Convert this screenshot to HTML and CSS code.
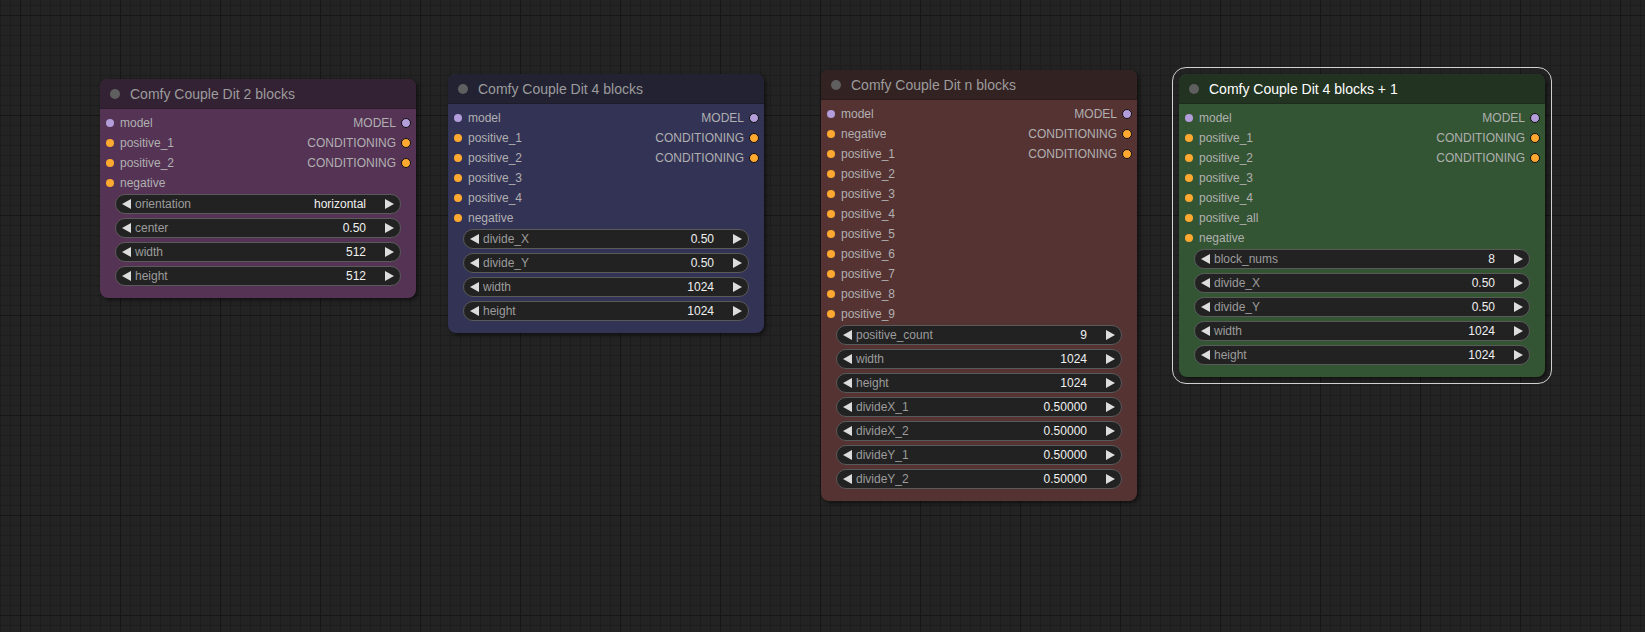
FILE: index.html
```html
<!DOCTYPE html>
<html>
<head>
<meta charset="utf-8">
<link rel="stylesheet" href="styles.css">
</head>
<body>
<div class="canvas">

  <div class="node purple n1">
    <div class="title"><span class="tdot"></span><span class="ttext">Comfy Couple Dit 2 blocks</span></div>
    <div class="rows">
      <div class="row"><span class="in"><i class="dot model"></i>model</span><span class="out">MODEL<i class="odot model"></i></span></div>
      <div class="row"><span class="in"><i class="dot cond"></i>positive_1</span><span class="out">CONDITIONING<i class="odot cond"></i></span></div>
      <div class="row"><span class="in"><i class="dot cond"></i>positive_2</span><span class="out">CONDITIONING<i class="odot cond"></i></span></div>
      <div class="row"><span class="in"><i class="dot cond"></i>negative</span></div>
    </div>
    <div class="widgets">
      <div class="widget"><svg class="arr" viewBox="0 0 9 10"><polygon points="9,0 0,5 9,10"/></svg><span class="wl">orientation</span><span class="wv">horizontal</span><svg class="arr r" viewBox="0 0 9 10"><polygon points="0,0 9,5 0,10"/></svg></div>
      <div class="widget"><svg class="arr" viewBox="0 0 9 10"><polygon points="9,0 0,5 9,10"/></svg><span class="wl">center</span><span class="wv">0.50</span><svg class="arr r" viewBox="0 0 9 10"><polygon points="0,0 9,5 0,10"/></svg></div>
      <div class="widget"><svg class="arr" viewBox="0 0 9 10"><polygon points="9,0 0,5 9,10"/></svg><span class="wl">width</span><span class="wv">512</span><svg class="arr r" viewBox="0 0 9 10"><polygon points="0,0 9,5 0,10"/></svg></div>
      <div class="widget"><svg class="arr" viewBox="0 0 9 10"><polygon points="9,0 0,5 9,10"/></svg><span class="wl">height</span><span class="wv">512</span><svg class="arr r" viewBox="0 0 9 10"><polygon points="0,0 9,5 0,10"/></svg></div>
    </div>
  </div>

  <div class="node blue n2">
    <div class="title"><span class="tdot"></span><span class="ttext">Comfy Couple Dit 4 blocks</span></div>
    <div class="rows">
      <div class="row"><span class="in"><i class="dot model"></i>model</span><span class="out">MODEL<i class="odot model"></i></span></div>
      <div class="row"><span class="in"><i class="dot cond"></i>positive_1</span><span class="out">CONDITIONING<i class="odot cond"></i></span></div>
      <div class="row"><span class="in"><i class="dot cond"></i>positive_2</span><span class="out">CONDITIONING<i class="odot cond"></i></span></div>
      <div class="row"><span class="in"><i class="dot cond"></i>positive_3</span></div>
      <div class="row"><span class="in"><i class="dot cond"></i>positive_4</span></div>
      <div class="row"><span class="in"><i class="dot cond"></i>negative</span></div>
    </div>
    <div class="widgets">
      <div class="widget"><svg class="arr" viewBox="0 0 9 10"><polygon points="9,0 0,5 9,10"/></svg><span class="wl">divide_X</span><span class="wv">0.50</span><svg class="arr r" viewBox="0 0 9 10"><polygon points="0,0 9,5 0,10"/></svg></div>
      <div class="widget"><svg class="arr" viewBox="0 0 9 10"><polygon points="9,0 0,5 9,10"/></svg><span class="wl">divide_Y</span><span class="wv">0.50</span><svg class="arr r" viewBox="0 0 9 10"><polygon points="0,0 9,5 0,10"/></svg></div>
      <div class="widget"><svg class="arr" viewBox="0 0 9 10"><polygon points="9,0 0,5 9,10"/></svg><span class="wl">width</span><span class="wv">1024</span><svg class="arr r" viewBox="0 0 9 10"><polygon points="0,0 9,5 0,10"/></svg></div>
      <div class="widget"><svg class="arr" viewBox="0 0 9 10"><polygon points="9,0 0,5 9,10"/></svg><span class="wl">height</span><span class="wv">1024</span><svg class="arr r" viewBox="0 0 9 10"><polygon points="0,0 9,5 0,10"/></svg></div>
    </div>
  </div>

  <div class="node red n3">
    <div class="title"><span class="tdot"></span><span class="ttext">Comfy Couple Dit n blocks</span></div>
    <div class="rows">
      <div class="row"><span class="in"><i class="dot model"></i>model</span><span class="out">MODEL<i class="odot model"></i></span></div>
      <div class="row"><span class="in"><i class="dot cond"></i>negative</span><span class="out">CONDITIONING<i class="odot cond"></i></span></div>
      <div class="row"><span class="in"><i class="dot cond"></i>positive_1</span><span class="out">CONDITIONING<i class="odot cond"></i></span></div>
      <div class="row"><span class="in"><i class="dot cond"></i>positive_2</span></div>
      <div class="row"><span class="in"><i class="dot cond"></i>positive_3</span></div>
      <div class="row"><span class="in"><i class="dot cond"></i>positive_4</span></div>
      <div class="row"><span class="in"><i class="dot cond"></i>positive_5</span></div>
      <div class="row"><span class="in"><i class="dot cond"></i>positive_6</span></div>
      <div class="row"><span class="in"><i class="dot cond"></i>positive_7</span></div>
      <div class="row"><span class="in"><i class="dot cond"></i>positive_8</span></div>
      <div class="row"><span class="in"><i class="dot cond"></i>positive_9</span></div>
    </div>
    <div class="widgets">
      <div class="widget"><svg class="arr" viewBox="0 0 9 10"><polygon points="9,0 0,5 9,10"/></svg><span class="wl">positive_count</span><span class="wv">9</span><svg class="arr r" viewBox="0 0 9 10"><polygon points="0,0 9,5 0,10"/></svg></div>
      <div class="widget"><svg class="arr" viewBox="0 0 9 10"><polygon points="9,0 0,5 9,10"/></svg><span class="wl">width</span><span class="wv">1024</span><svg class="arr r" viewBox="0 0 9 10"><polygon points="0,0 9,5 0,10"/></svg></div>
      <div class="widget"><svg class="arr" viewBox="0 0 9 10"><polygon points="9,0 0,5 9,10"/></svg><span class="wl">height</span><span class="wv">1024</span><svg class="arr r" viewBox="0 0 9 10"><polygon points="0,0 9,5 0,10"/></svg></div>
      <div class="widget"><svg class="arr" viewBox="0 0 9 10"><polygon points="9,0 0,5 9,10"/></svg><span class="wl">divideX_1</span><span class="wv">0.50000</span><svg class="arr r" viewBox="0 0 9 10"><polygon points="0,0 9,5 0,10"/></svg></div>
      <div class="widget"><svg class="arr" viewBox="0 0 9 10"><polygon points="9,0 0,5 9,10"/></svg><span class="wl">divideX_2</span><span class="wv">0.50000</span><svg class="arr r" viewBox="0 0 9 10"><polygon points="0,0 9,5 0,10"/></svg></div>
      <div class="widget"><svg class="arr" viewBox="0 0 9 10"><polygon points="9,0 0,5 9,10"/></svg><span class="wl">divideY_1</span><span class="wv">0.50000</span><svg class="arr r" viewBox="0 0 9 10"><polygon points="0,0 9,5 0,10"/></svg></div>
      <div class="widget"><svg class="arr" viewBox="0 0 9 10"><polygon points="9,0 0,5 9,10"/></svg><span class="wl">divideY_2</span><span class="wv">0.50000</span><svg class="arr r" viewBox="0 0 9 10"><polygon points="0,0 9,5 0,10"/></svg></div>
    </div>
  </div>

  <div class="node green n4 selected">
    <div class="title"><span class="tdot"></span><span class="ttext">Comfy Couple Dit 4 blocks + 1</span></div>
    <div class="rows">
      <div class="row"><span class="in"><i class="dot model"></i>model</span><span class="out">MODEL<i class="odot model"></i></span></div>
      <div class="row"><span class="in"><i class="dot cond"></i>positive_1</span><span class="out">CONDITIONING<i class="odot cond"></i></span></div>
      <div class="row"><span class="in"><i class="dot cond"></i>positive_2</span><span class="out">CONDITIONING<i class="odot cond"></i></span></div>
      <div class="row"><span class="in"><i class="dot cond"></i>positive_3</span></div>
      <div class="row"><span class="in"><i class="dot cond"></i>positive_4</span></div>
      <div class="row"><span class="in"><i class="dot cond"></i>positive_all</span></div>
      <div class="row"><span class="in"><i class="dot cond"></i>negative</span></div>
    </div>
    <div class="widgets">
      <div class="widget"><svg class="arr" viewBox="0 0 9 10"><polygon points="9,0 0,5 9,10"/></svg><span class="wl">block_nums</span><span class="wv">8</span><svg class="arr r" viewBox="0 0 9 10"><polygon points="0,0 9,5 0,10"/></svg></div>
      <div class="widget"><svg class="arr" viewBox="0 0 9 10"><polygon points="9,0 0,5 9,10"/></svg><span class="wl">divide_X</span><span class="wv">0.50</span><svg class="arr r" viewBox="0 0 9 10"><polygon points="0,0 9,5 0,10"/></svg></div>
      <div class="widget"><svg class="arr" viewBox="0 0 9 10"><polygon points="9,0 0,5 9,10"/></svg><span class="wl">divide_Y</span><span class="wv">0.50</span><svg class="arr r" viewBox="0 0 9 10"><polygon points="0,0 9,5 0,10"/></svg></div>
      <div class="widget"><svg class="arr" viewBox="0 0 9 10"><polygon points="9,0 0,5 9,10"/></svg><span class="wl">width</span><span class="wv">1024</span><svg class="arr r" viewBox="0 0 9 10"><polygon points="0,0 9,5 0,10"/></svg></div>
      <div class="widget"><svg class="arr" viewBox="0 0 9 10"><polygon points="9,0 0,5 9,10"/></svg><span class="wl">height</span><span class="wv">1024</span><svg class="arr r" viewBox="0 0 9 10"><polygon points="0,0 9,5 0,10"/></svg></div>
    </div>
  </div>

</div>
</body>
</html>
```

FILE: styles.css
```css
html, body {
  margin: 0;
  padding: 0;
}
body {
  width: 1645px;
  height: 632px;
  overflow: hidden;
  font-family: "Liberation Sans", Arial, sans-serif;
  background: #222;
}
.canvas {
  position: relative;
  width: 1645px;
  height: 632px;
  background-color: #232323;
  background-image:
    linear-gradient(to right, #161616 1px, transparent 1px),
    linear-gradient(to bottom, #161616 1px, transparent 1px),
    linear-gradient(to right, #1d1d1d 1px, transparent 1px),
    linear-gradient(to bottom, #1d1d1d 1px, transparent 1px);
  background-size: 100px 100px, 100px 100px, 10px 10px, 10px 10px;
  background-position: 20px 15px, 20px 15px, 0 5px, 0 5px;
}
.node {
  position: absolute;
  border-radius: 8px;
  box-shadow: 2px 2px 4px rgba(0, 0, 0, 0.55);
  padding-bottom: 12px;
}
.n1 { left: 100px; top: 79px; width: 316px; }
.n2 { left: 448px; top: 74px; width: 316px; }
.n3 { left: 821px; top: 70px; width: 316px; }
.n4 { left: 1179px; top: 74px; width: 366px; }

.purple { background: #553355; }
.purple .title { background: #332233; }
.blue { background: #333355; }
.blue .title { background: #222233; }
.red { background: #553333; }
.red .title { background: #332222; }
.green { background: #335533; }
.green .title { background: #223322; }

.selected::before {
  content: "";
  position: absolute;
  left: -7px;
  top: -7px;
  right: -7px;
  bottom: -7px;
  border: 1.5px solid #d0d0d0;
  border-radius: 14px;
  pointer-events: none;
}

.title {
  height: 30px;
  border-radius: 8px 8px 0 0;
  display: flex;
  align-items: center;
  box-shadow: inset 0 -1px 0 rgba(0, 0, 0, 0.15);
}
.tdot {
  width: 10px;
  height: 10px;
  border-radius: 50%;
  background: #5f5f5f;
  margin-left: 10px;
  margin-right: 10px;
}
.ttext {
  font-size: 14px;
  color: #9c9c9c;
  white-space: nowrap;
}
.selected .ttext { color: #fff; }

.rows {
  display: flex;
  flex-direction: column;
  padding-top: 4px;
}
.row {
  height: 20px;
  display: flex;
  align-items: center;
  justify-content: space-between;
  font-size: 12px;
  color: #b0b0b0;
  white-space: nowrap;
}
.in {
  display: flex;
  align-items: center;
}
.out {
  display: flex;
  align-items: center;
}
.dot {
  width: 8px;
  height: 8px;
  border-radius: 50%;
  margin-left: 6px;
  margin-right: 6px;
}
.odot {
  width: 8px;
  height: 8px;
  border-radius: 50%;
  border: 1px solid #111;
  margin-left: 5px;
  margin-right: 5px;
}
.model { background: #b39ddb; }
.cond { background: #ffa931; }

.widgets {
  display: flex;
  flex-direction: column;
  gap: 4px;
  margin: 1px 15px 0 15px;
}
.widget {
  box-sizing: border-box;
  height: 20px;
  border: 1px solid #5a5a5a;
  border-radius: 10px;
  background: #222;
  display: flex;
  align-items: center;
  padding: 0 6px;
  font-size: 12px;
  white-space: nowrap;
}
.arr {
  width: 9px;
  height: 10px;
  fill: #ddd;
  flex: none;
}
.wl {
  color: #9c9c9c;
  margin-left: 4px;
  flex: 1;
}
.wv {
  color: #f0f0f0;
  margin-right: 19px;
}
```
